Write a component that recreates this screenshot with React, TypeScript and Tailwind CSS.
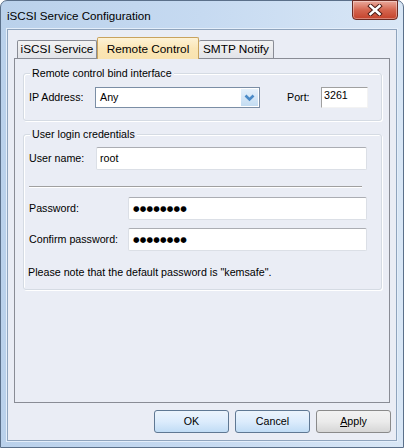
import React from 'react';

const ui = { fontFamily: '"Liberation Sans", Arial, sans-serif' };

const Dots: React.FC = () => (
  <span className="text-[7.5px] tracking-[0.2px] text-black" style={{ fontFamily: '"DejaVu Sans", sans-serif' }}>
    ●●●●●●●●
  </span>
);

const TextBox: React.FC<{ className?: string; children?: React.ReactNode }> = ({ className = '', children }) => (
  <div
    className={`flex h-[23px] items-center bg-white border border-[#dbdfe6] border-t-[#abadb3] rounded-[2px] pl-[3px] text-[10.7px] text-black ${className}`}
  >
    {children}
  </div>
);

const Group: React.FC<{ title: string; className?: string; children: React.ReactNode }> = ({ title, className = '', children }) => (
  <div className={`relative mx-[8px] mr-[7px] rounded-[3px] border border-[#d5dbe3] shadow-[inset_1px_1px_0_#ffffff,1px_1px_0_#ffffff] ${className}`}>
    <span className="absolute left-[6px] top-[-8px] bg-[#eaedf5] px-[2px] text-[10.7px] leading-[14px] text-black">
      {title}
    </span>
    {children}
  </div>
);

const Button: React.FC<{ blue?: boolean; children: React.ReactNode }> = ({ blue, children }) => (
  <div
    className={`flex h-[23px] w-[75px] items-center justify-center rounded-[3px] border text-[10.7px] text-black ${
      blue
        ? 'border-[#5f7893] bg-gradient-to-b from-[#ecf4fc] via-[#dcecfc] to-[#c1dcf5]'
        : 'border-[#8a8a8a] bg-gradient-to-b from-[#f2f2f2] via-[#ebebeb] to-[#d6d6d6]'
    }`}
  >
    {children}
  </div>
);

export default function App() {
  return (
    <div className="h-[448px] w-[404px] overflow-hidden bg-white" style={ui}>
      <div className="flex h-[448px] w-[404px] flex-col rounded-t-[7px] border border-[#5b708a] bg-gradient-to-r from-[#bad1eb] via-[#c6daf1] to-[#d9e7f6]">
        {/* Title bar */}
        <div className="flex h-[28px] items-start justify-between">
          <span className="ml-[6px] mt-[7px] text-[11.6px] leading-[15px] text-black">iSCSI Service Configuration</span>
          <div className="mr-[5px] mt-[-1px] flex h-[20px] w-[46px] items-center justify-center rounded-b-[4px] border border-[#6b2a22] bg-gradient-to-b from-[#e9a99c] via-[#d4654f] to-[#c4412a] shadow-[inset_0_0_0_1px_rgba(255,255,255,0.35)]">
            <svg width="16" height="12" viewBox="0 0 16 12">
              <path d="M3.5 2 L12.5 10 M12.5 2 L3.5 10" stroke="#4a1a14" strokeWidth="4.4" strokeLinecap="square" />
              <path d="M3.5 2 L12.5 10 M12.5 2 L3.5 10" stroke="#ffffff" strokeWidth="2.6" strokeLinecap="square" />
            </svg>
          </div>
        </div>

        {/* Client area */}
        <div className="mx-[6px] mb-[6px] flex flex-1 flex-col border border-[#8fa4bd] bg-[#eaedf5] shadow-[0_0_0_1px_#e4eefa]">
          {/* Tabs */}
          <div className="ml-[9px] mt-[7px] flex h-[21px] items-end">
            <div className="flex h-[18px] w-[80px] items-center justify-center rounded-t-[2px] border border-b-0 border-[#898c95] bg-gradient-to-b from-[#f3f3f3] to-[#e2e4e9] text-[11.8px] text-black">
              iSCSI Service
            </div>
            <div className="relative z-10 mb-[-1px] flex h-[22px] w-[102px] items-start justify-center rounded-t-[2px] border border-b-0 border-[#c9a35e] bg-gradient-to-b from-[#fdf2d6] via-[#fbe6b6] to-[#f9e3b0] pt-[3px] text-[11.8px] text-black">
              Remote Control
            </div>
            <div className="flex h-[18px] w-[75px] items-center justify-center rounded-t-[2px] border border-b-0 border-l-0 border-[#898c95] bg-gradient-to-b from-[#f3f3f3] to-[#e2e4e9] text-[11.8px] text-black">
              SMTP Notify
            </div>
          </div>

          {/* Tab page */}
          <div className="ml-[6px] flex h-[345px] w-[376px] flex-col border border-[#898c95] bg-[#eaedf5]">
            <Group title="Remote control bind interface" className="mt-[14px] h-[48px]">
              <div className="mt-[13px] flex h-[21px] items-center">
                <span className="ml-[5px] w-[66px] text-[10.7px] text-black">IP Address:</span>
                <div className="flex h-[21px] w-[165px] items-center justify-between border border-[#7b8ea5] bg-white pl-[4px] text-[10.7px] text-black">
                  <span>Any</span>
                  <div className="mr-[1px] flex h-[17px] w-[17px] items-center justify-center bg-gradient-to-b from-[#e6f1fb] to-[#c3dcf2]">
                    <svg width="11" height="8" viewBox="0 0 11 8">
                      <path d="M1.5 1.5 L5.5 5.5 L9.5 1.5" fill="none" stroke="#4b8bc8" strokeWidth="2.6" />
                    </svg>
                  </div>
                </div>
                <span className="ml-[27px] w-[34px] text-[10.7px] text-black">Port:</span>
                <div className="h-[21px] w-[47px] border border-l-[#a0a0a0] border-t-[#a0a0a0] border-r-[#f3f3f3] border-b-[#f3f3f3] bg-white pl-[2px] text-[10.7px] leading-[14px] text-black">
                  3261
                </div>
              </div>
            </Group>

            <Group title="User login credentials" className="mt-[13px] h-[156px]">
              <div className="mt-[12px] flex items-center">
                <span className="ml-[5px] w-[67px] text-[10.7px] text-black">User name:</span>
                <TextBox className="w-[271px] items-start pt-[2px]">root</TextBox>
              </div>
              <div className="ml-[5px] mt-[16px] h-[2px] w-[333px] border-t border-b border-t-[#a0a0a0] border-b-white" />
              <div className="mt-[9px] flex items-center">
                <span className="ml-[5px] w-[99px] text-[10.7px] text-black">Password:</span>
                <TextBox className="w-[239px] pl-[4px]"><Dots /></TextBox>
              </div>
              <div className="mt-[8px] flex items-center">
                <span className="ml-[5px] w-[99px] text-[10.7px] text-black">Confirm password:</span>
                <TextBox className="w-[239px] pl-[4px]"><Dots /></TextBox>
              </div>
              <p className="ml-[4px] mt-[14px] text-[10.7px] leading-[14px] text-black">
                Please note that the default password is "kemsafe".
              </p>
            </Group>
          </div>

          {/* Buttons */}
          <div className="mr-[5px] mt-[7px] flex justify-end gap-[6px]">
            <Button blue>OK</Button>
            <Button blue>Cancel</Button>
            <Button>
              <span><u>A</u>pply</span>
            </Button>
          </div>
        </div>
      </div>
    </div>
  );
}
